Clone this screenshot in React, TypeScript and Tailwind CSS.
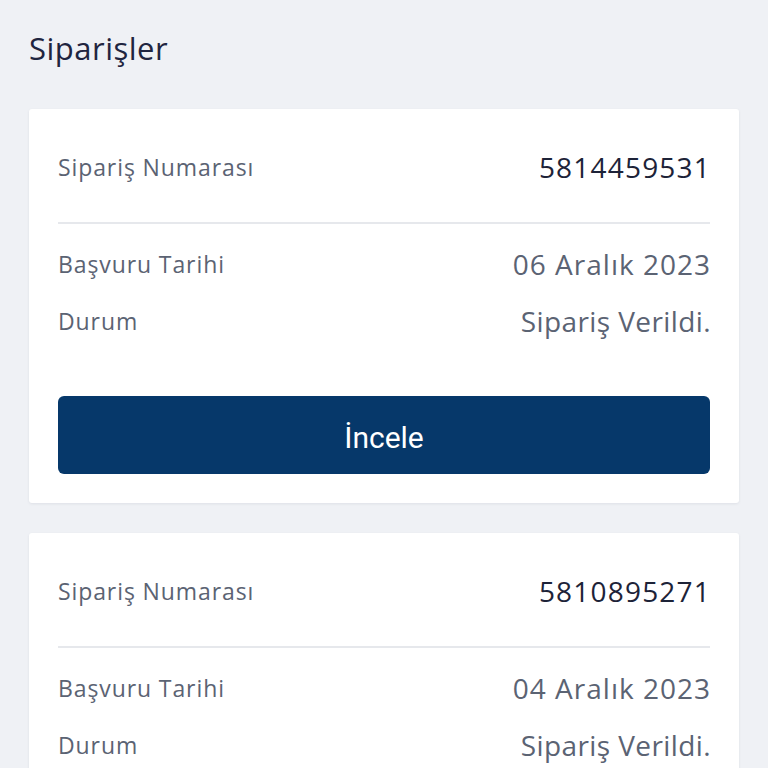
import React from 'react';

interface Order {
  no: string;
  date: string;
  status: string;
}

const orders: Order[] = [
  { no: '5814459531', date: '06 Aralık 2023', status: 'Sipariş Verildi.' },
  { no: '5810895271', date: '04 Aralık 2023', status: 'Sipariş Verildi.' },
];

function OrderCard({ order }: { order: Order }) {
  return (
    <div className="rounded-[3px] bg-white px-[29px] pt-[38px] pb-[29px] shadow-[0_1px_3px_rgba(30,40,70,0.08)]">
      <div className="flex h-[40px] items-center justify-between">
        <span className="text-[23px] tracking-[0.9px] text-[#5b6373]">Sipariş Numarası</span>
        <span className="-mr-[1px] text-[28px] tracking-[1.2px] text-[#1d2338]">{order.no}</span>
      </div>
      <div className="mt-[35px] border-t-2 border-[#e6e8ec]" />
      <div className="mt-[20px] flex h-[40px] items-center justify-between">
        <span className="text-[23px] tracking-[0.9px] text-[#5b6373]">Başvuru Tarihi</span>
        <span className="-mr-[1px] text-[28px] tracking-[1px] text-[#5b6373]">{order.date}</span>
      </div>
      <div className="mt-[17px] flex h-[40px] items-center justify-between">
        <span className="text-[23px] tracking-[0.9px] text-[#5b6373]">Durum</span>
        <span className="-mr-[1px] text-[28px] tracking-[0.4px] text-[#5b6373]">{order.status}</span>
      </div>
      <button className="mt-[55px] flex h-[78px] w-full items-center justify-center rounded-[6px] bg-[#06386a] pt-[4px] font-['Roboto',sans-serif] text-[30px] text-white">
        İncele
      </button>
    </div>
  );
}

export default function App() {
  return (
    <div className="h-[768px] overflow-hidden bg-[#eff1f5] px-[29px] pt-[28px] font-['Open_Sans',sans-serif]">
      <h1 className="h-[40px] text-[31px] leading-[40px] tracking-[0.5px] text-[#1f2540]">Siparişler</h1>
      <div className="mt-[41px] flex flex-col gap-[30px]">
        {orders.map((o) => (
          <OrderCard key={o.no} order={o} />
        ))}
      </div>
    </div>
  );
}
